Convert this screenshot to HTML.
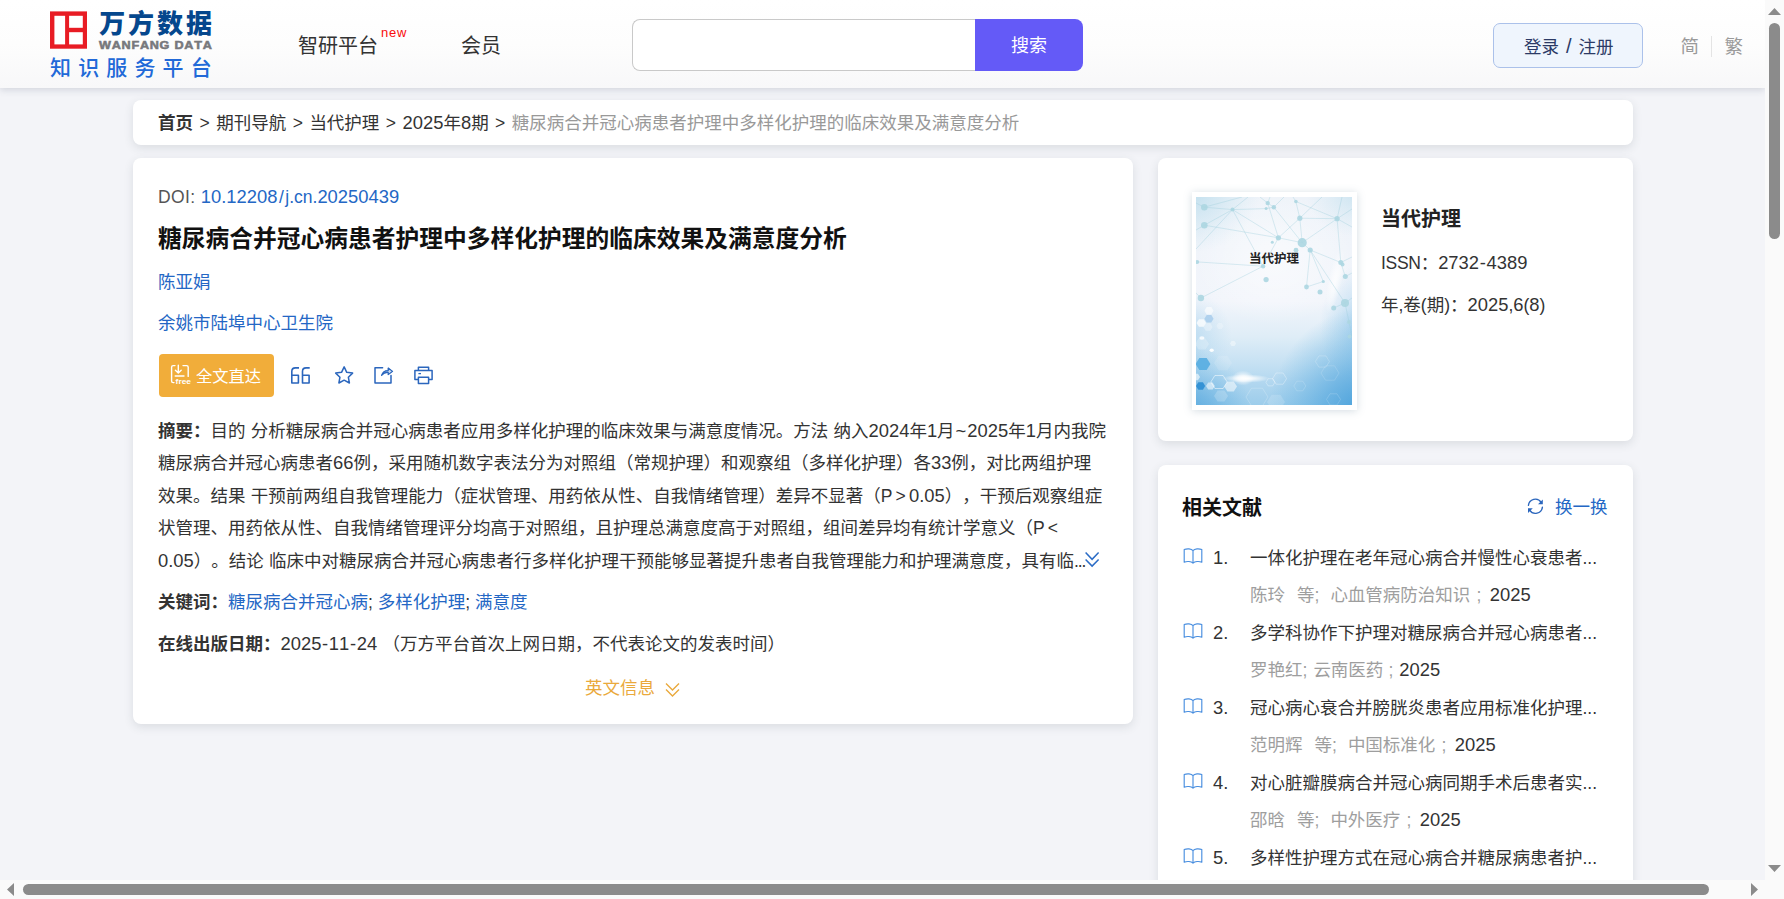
<!DOCTYPE html>
<html lang="zh-CN">
<head>
<meta charset="utf-8">
<title>糖尿病合并冠心病患者护理中多样化护理的临床效果及满意度分析</title>
<style>
*{box-sizing:border-box;margin:0;padding:0}
html,body{width:1784px;height:899px;overflow:hidden}
body{position:relative;background:#f3f4f8;color:#333;font-family:"Liberation Sans","Noto Sans CJK SC",sans-serif;font-size:17.5px;line-height:1;text-spacing-trim:space-all;font-kerning:none}
.abs{position:absolute;white-space:nowrap}
a{color:inherit;text-decoration:none}
/* header */
#hd{position:absolute;left:0;top:0;width:1765px;height:88px;background:linear-gradient(180deg,#ffffff 0%,#fdfdfd 50%,#f8f8f9 100%);box-shadow:0 2px 7px rgba(60,70,100,.18)}
.t{position:absolute;white-space:nowrap;line-height:1;transform:translateY(-44.5%)}
.n{font-size:105%;line-height:0}
.card{position:absolute;background:#fff;border-radius:8px;box-shadow:0 3px 10px rgba(50,62,70,.125)}
.blue{color:#2467c5}
.gray{color:#9e9e9e}
.b{font-weight:bold}
.sp{display:inline-block}
.sep{display:inline-block;width:23.2px;text-align:center}
.fw{display:inline-block;width:16.5px;text-align:center}
.dk{color:#333}
.dots{letter-spacing:-1.05px}
.hy{margin:0 .7px}
#ab1,#ab2,#ab3,#ab4,#ab5,#dt{word-spacing:.4px}
</style>
</head>
<body>
<!-- HEADER -->
<div id="hd">
  <svg class="abs" style="left:50px;top:11px" width="38" height="38" viewBox="0 0 38 38"><rect x="0" y=".4" width="37" height="37.3" fill="#e81c24"/><rect x="4.4" y="4.8" width="10.7" height="28.6" fill="#fff"/><rect x="19.1" y="4.8" width="13.7" height="12" fill="#fff"/><rect x="19.1" y="21.2" width="13.7" height="12.2" fill="#fff"/></svg>
  <div class="t" id="lg1" style="left:99.2px;top:21px;font-family:'Noto Sans CJK SC',sans-serif;font-weight:900;font-size:26px;color:#05478d;letter-spacing:2.9px">万方数据</div>
  <div class="t" id="lg2" style="left:99.3px;top:44.8px;font-weight:bold;font-size:10px;color:#77787c;letter-spacing:.6px;-webkit-text-stroke:.5px #77787c;transform-origin:0 50%;transform:translateY(-44.5%) scaleX(1.262)">WANFANG DATA</div>
  <div class="t" id="lg3" style="left:50px;top:66.3px;font-size:21px;font-weight:500;color:#2169d8;letter-spacing:7.15px">知识服务平台</div>

  <div class="t" style="left:298px;top:45px;font-size:20px;color:#333">智研平台</div>
  <div class="t" style="left:381px;top:31.5px;font-size:13px;color:#fa0c0c;letter-spacing:.75px">new</div>
  <div class="t" style="left:461px;top:45px;font-size:20px;color:#333">会员</div>

  <div class="abs" style="left:632px;top:19px;width:346px;height:52px;border:1px solid #c9c9c9;border-right:none;border-radius:8px 0 0 8px;background:#fff"></div>
  <div class="abs" style="left:975px;top:19px;width:108px;height:52px;border-radius:0 8px 8px 0;background:#645af7"></div>
  <div class="t" style="left:1011px;top:45px;font-size:18px;color:#fff">搜索</div>

  <div class="abs" style="left:1493px;top:23px;width:150px;height:45px;border:1px solid #abc1ea;border-radius:7px;background:#eff5fd"></div>
  <div class="t" style="left:1524px;top:46.8px;font-size:17.5px;color:#2c3a66">登录 <span style="margin:0 2.1px;font-size:20px;line-height:0">/</span> 注册</div>
  <div class="t" style="left:1680.5px;top:45.5px;font-size:18.5px;color:#9a9a9a">简</div>
  <div class="abs" style="left:1711px;top:36px;width:1px;height:21px;background:#e4e4e4"></div>
  <div class="t" style="left:1724.5px;top:45.5px;font-size:18.5px;color:#9a9a9a">繁</div>
</div>

<!-- BREADCRUMB -->
<div class="card" style="left:133px;top:100px;width:1500px;height:45px"></div>
<div class="t" id="bc" style="left:158px;top:122.5px;font-size:17.5px;color:#333"><span class="b">首页</span><span class="sep">&gt;</span>期刊导航<span class="sep">&gt;</span>当代护理<span class="sep">&gt;</span><span class="n">2025</span>年<span class="n">8</span>期<span class="sep">&gt;</span><span style="color:#999">糖尿病合并冠心病患者护理中多样化护理的临床效果及满意度分析</span></div>

<!-- MAIN CARD -->
<div class="card" style="left:133px;top:157.5px;width:1000px;height:566.5px"></div>
<div class="t" id="doi" style="left:158px;top:197px;color:#555"><span style="letter-spacing:.4px">DOI: </span><span class="blue"><span class="n">10.12208</span><span style="margin:0 1.5px">/</span>j.cn.<span class="n">20250439</span></span></div>
<div class="t b" id="ttl" style="left:158px;top:238px;font-size:23.75px;color:#111">糖尿病合并冠心病患者护理中多样化护理的临床效果及满意度分析</div>
<div class="t blue" id="au" style="left:158px;top:282px">陈亚娟</div>
<div class="t blue" id="af" style="left:158px;top:322.5px">余姚市陆埠中心卫生院</div>

<div class="abs" style="left:159px;top:354px;width:115px;height:43px;border-radius:4px;background:#f1ad3a"></div>
<div class="t" style="left:196px;top:374.6px;font-size:16.25px;color:#fff">全文直达</div>


<!-- button icon -->
<svg class="abs" style="left:169px;top:363px" width="24" height="24" viewBox="0 0 24 24" fill="none" stroke="#fff" stroke-width="1.4" stroke-linecap="round" stroke-linejoin="round"><path d="M6 2.6H4.2Q2.6 2.6 2.6 4.2V18Q2.6 19.6 4.2 19.6H5"/><path d="M14 2.6H17.6Q19.2 2.6 19.2 4.2V13.4"/><path d="M9.3 2.2V9.6M6.4 7.2L9.3 10L12.2 7.2"/><path d="M6.2 13H15"/><text x="6.6" y="21" font-family="Liberation Sans, sans-serif" font-size="7.6" font-weight="bold" fill="#fff" stroke="none" textLength="15.4" lengthAdjust="spacingAndGlyphs">free</text></svg>
<!-- quote 66 -->
<svg class="abs" style="left:289px;top:365px" width="22" height="20" viewBox="0 0 22 20" fill="none" stroke="#2b66bd" stroke-width="1.6" stroke-linejoin="round"><path d="M10 2.9H6.4Q2.8 2.9 2.8 6.5V18H9.4V10.2H2.8"/><path d="M20.7 2.9H17.1Q13.5 2.9 13.5 6.5V18H20.1V10.2H13.5"/></svg>
<!-- star -->
<svg class="abs" style="left:334px;top:365px" width="21" height="20" viewBox="0 0 21 20" fill="none" stroke="#2b66bd" stroke-width="1.5" stroke-linejoin="round"><path d="M10.15 1.9L12.75 7.3L18.6 8.1L14.35 12.2L15.4 18L10.15 15.2L4.9 18L5.95 12.2L1.7 8.1L7.55 7.3Z"/></svg>
<!-- share -->
<svg class="abs" style="left:373px;top:365px" width="22" height="20" viewBox="0 0 22 20" fill="none" stroke="#2b66bd" stroke-width="1.5" stroke-linejoin="round" stroke-linecap="round"><path d="M9.6 2.8H2V18H18V10.4"/><path d="M8.6 10.4C9.6 7 12 5.6 15.2 5.6V3L19.6 6.4L15.2 9.6V7.4C12.4 7.2 10.2 8.2 8.6 10.4Z" fill="#2b66bd" stroke-width=".6" fill-opacity=".25"/><path d="M8.6 10.4C9.6 7 12 5.6 15.2 5.6V3L19.6 6.4L15.2 9.6V7.4C12.4 7.2 10.2 8.2 8.6 10.4Z" stroke-width="1.1"/></svg>
<!-- print -->
<svg class="abs" style="left:413px;top:365px" width="21" height="20" viewBox="0 0 21 20" fill="none" stroke="#2b66bd" stroke-width="1.5" stroke-linejoin="round"><path d="M5.4 5.4V2.2H15.6V5.4"/><path d="M5.4 14.6H1.9V5.4H19.1V14.6H15.6"/><rect x="5.4" y="12.2" width="10.2" height="6.4"/><path d="M5.4 8.6H8" stroke-width="1.3"/></svg>
<!-- abstract chevron -->
<svg class="abs" style="left:1084px;top:551px" width="17" height="17" viewBox="0 0 17 17" fill="none" stroke="#2b6cc6" stroke-width="1.5"><path d="M1.6 1.6L8.1 8.3L14.6 1.6M1.6 8.4L8.1 15.1L14.6 8.4"/></svg>
<!-- english info chevron -->
<svg class="abs" style="left:664px;top:680.6px" width="17" height="17" viewBox="0 0 17 17" fill="none" stroke="#eaa93c" stroke-width="1.4"><path d="M2 2.6L8.5 9L15 2.6M2 8.6L8.5 15L15 8.6"/></svg>
<!-- abstract -->
<div class="t" id="ab1" style="left:158px;top:430.5px"><span class="b">摘要：</span>目的 分析糖尿病合并冠心病患者应用多样化护理的临床效果与满意度情况。方法 纳入<span class="n">2024</span>年<span class="n">1</span>月<span class="n" style="margin:0 1px">~</span><span class="n">2025</span>年<span class="n">1</span>月内我院</div>
<div class="t" id="ab2" style="left:158px;top:463px">糖尿病合并冠心病患者<span class="n">66</span>例，采用随机数字表法分为对照组（常规护理）和观察组（多样化护理）各<span class="n">33</span>例，对比两组护理</div>
<div class="t" id="ab3" style="left:158px;top:495.5px">效果。结果 干预前两组自我管理能力（症状管理、用药依从性、自我情绪管理）差异不显著（P<span class="fw">&gt;</span><span class="n">0.05</span>），干预后观察组症</div>
<div class="t" id="ab4" style="left:158px;top:528px">状管理、用药依从性、自我情绪管理评分均高于对照组，且护理总满意度高于对照组，组间差异均有统计学意义（P<span class="fw">&lt;</span></div>
<div class="t" id="ab5" style="left:158px;top:560.5px"><span class="n">0.05</span>）。结论 临床中对糖尿病合并冠心病患者行多样化护理干预能够显著提升患者自我管理能力和护理满意度，具有临<span class="dots">...</span></div>

<div class="t" id="kw" style="left:158px;top:601.5px"><span class="b">关键词：</span><span class="blue">糖尿病合并冠心病</span>; <span class="blue">多样化护理</span>; <span class="blue">满意度</span></div>
<div class="t" id="dt" style="left:158px;top:643.5px"><span class="b">在线出版日期：</span><span class="n">2025<span class="hy">-</span>11<span class="hy">-</span>24</span> （万方平台首次上网日期，不代表论文的发表时间）</div>
<div class="t" id="en" style="left:585px;top:687.6px;color:#eaa93c">英文信息</div>

<!-- RIGHT CARD 1 -->
<div class="card" style="left:1158px;top:157.5px;width:475px;height:283px"></div>
<div class="abs" style="left:1191.5px;top:192px;width:165.5px;height:218px;background:#fff;box-shadow:0 1px 8px rgba(100,130,150,.28)"></div>

<svg class="abs" style="left:1196px;top:197px" width="156" height="208" viewBox="0 0 156 208">
<defs>
<linearGradient id="cg" x1="0" y1="0" x2="0" y2="1"><stop offset="0" stop-color="#eef3f9"/><stop offset=".5" stop-color="#f2f5fb"/><stop offset=".67" stop-color="#dfedf7"/><stop offset=".8" stop-color="#c6e1f3"/><stop offset=".9" stop-color="#b0d6ef"/><stop offset="1" stop-color="#9dcdeb"/></linearGradient>
<radialGradient id="r1"><stop offset="0" stop-color="#3a98d7" stop-opacity=".95"/><stop offset=".45" stop-color="#4aa2dc" stop-opacity=".6"/><stop offset="1" stop-color="#5aaee0" stop-opacity="0"/></radialGradient>
<radialGradient id="r2"><stop offset="0" stop-color="#b9dcec" stop-opacity=".9"/><stop offset="1" stop-color="#c8e3f0" stop-opacity="0"/></radialGradient>
<radialGradient id="r3"><stop offset="0" stop-color="#86c2e9" stop-opacity=".8"/><stop offset="1" stop-color="#9ccdec" stop-opacity="0"/></radialGradient>
<radialGradient id="gl"><stop offset="0" stop-color="#fff" stop-opacity="1"/><stop offset=".4" stop-color="#fff" stop-opacity=".7"/><stop offset="1" stop-color="#fff" stop-opacity="0"/></radialGradient>
<clipPath id="cc"><rect width="156" height="208"/></clipPath>
</defs>
<g clip-path="url(#cc)">
<rect width="156" height="208" fill="url(#cg)"/>
<ellipse cx="-6" cy="-6" rx="70" ry="62" fill="url(#r2)"/>
<ellipse cx="162" cy="-4" rx="52" ry="44" fill="url(#r2)" opacity=".75"/>
<ellipse cx="-12" cy="138" rx="48" ry="46" fill="url(#r3)" opacity=".6"/>
<ellipse cx="170" cy="128" rx="46" ry="62" fill="url(#r3)" opacity=".85"/>
<ellipse cx="172" cy="222" rx="100" ry="112" fill="url(#r1)"/>
<ellipse cx="-14" cy="226" rx="72" ry="80" fill="url(#r1)" opacity=".85"/>
<ellipse cx="78" cy="62" rx="80" ry="66" fill="url(#gl)" opacity=".55"/><ellipse cx="139" cy="84" rx="7" ry="34" fill="url(#gl)" opacity=".75" transform="rotate(12 139 84)"/>
<path d="M8.3 10.2L36.5 12.6M8.3 28.2L36.5 12.6M8.3 28.2L82.4 40.8M36.5 12.6L82.4 40.8M36.5 12.6L70.1 11.6M36.5 12.6L67.1 69.2M1.2 64.9L67.1 69.2M67.1 69.2L4.9 101M71.7 6.1L82.4 40.8M77.8 10.2L106.2 45.7M99.9 4.5L103.8 21.2M103.8 21.2L141.1 21.7M103.8 21.2L82.4 40.8M103.8 21.2L106.2 45.7M99.9 4.5L141.1 21.7M82.4 40.8L106.2 45.7M106.2 45.7L114.2 53M106.2 45.7L141.1 21.7M114.2 53L144.8 65.5M114.2 53L110.5 90M114.2 53L127.3 84.5M110.5 90L127.3 84.5M141.1 21.7L144.8 65.5M82.4 40.8L67.1 69.2M114.2 53L149 106M144.8 65.5L149.3 79.6M149 106L153 125M137.7 111L149 106M70.1 11.6L77.8 10.2M71.7 6.1L77.8 10.2M8.3 10.2L46 0M8.3 10.2L0 6M8.3 28.2L0 33M0 52L36.5 12.6M36.5 12.6L52 0M71.7 6.1L64 0M71.7 6.1L74 0M77.8 10.2L88 0M99.9 4.5L97 0M103.8 21.2L126 0M141.1 21.7L146 0M141.1 21.7L156 12M141.1 21.7L156 30M144.8 65.5L156 60M149.3 79.6L156 76M4.9 101L0 96M153 125L156 140M149 106L156 101" stroke="#9ccddb" stroke-width="1" stroke-opacity=".36" fill="none"/>
<g fill="#acd6e1" fill-opacity=".9"><circle cx="8.3" cy="10.2" r="3.3"/><circle cx="8.3" cy="28.2" r="3.3"/><circle cx="36.5" cy="12.6" r="2"/><circle cx="71.7" cy="6.1" r="2.2"/><circle cx="77.8" cy="10.2" r="2.2"/><circle cx="70.1" cy="11.6" r="1.5"/><circle cx="99.9" cy="4.5" r="1.8"/><circle cx="103.8" cy="21.2" r="2.6"/><circle cx="141.1" cy="21.7" r="2.6"/><circle cx="82.4" cy="40.8" r="2.6"/><circle cx="76.3" cy="45.3" r="1.5"/><circle cx="106.2" cy="45.7" r="4.6"/><circle cx="114.2" cy="53" r="2.6"/><circle cx="100" cy="53.2" r="2.4"/><circle cx="67.1" cy="69.2" r="2.2"/><circle cx="70.1" cy="82.6" r="2.6"/><circle cx="110.5" cy="90" r="2.4"/><circle cx="127.3" cy="84.5" r="1.6"/><circle cx="124" cy="95.1" r="2.5"/><circle cx="144.8" cy="65.5" r="2.5"/><circle cx="146.5" cy="67.5" r="2"/><circle cx="149.3" cy="79.6" r="2.5"/><circle cx="1.2" cy="64.9" r="2"/><circle cx="4.9" cy="101" r="3.2"/><circle cx="149" cy="106" r="4"/><circle cx="137.7" cy="111" r="2.5"/><circle cx="153" cy="125" r="2"/><circle cx="153.5" cy="139.5" r="2"/></g>
<g fill="#fff">
<path d="M17.6 113.7L15.3 117.4L10.7 117.4L8.4 113.7L10.7 110.0L15.3 110.0Z" fill-opacity=".6"/><path d="M10.1 126.0L7.7 129.8L2.9 129.8L0.5 126.0L2.9 122.2L7.7 122.2Z" fill-opacity=".75"/><path d="M17.6 121.7L15.3 125.4L10.7 125.4L8.4 121.7L10.7 118.0L15.3 118.0Z" fill="#9cc6ea" fill-opacity=".7"/><path d="M16.6 130.0L14.3 133.7L9.7 133.7L7.4 130.0L9.7 126.3L14.3 126.3Z" fill-opacity=".3"/><path d="M27.6 129.0L25.8 131.9L22.2 131.9L20.4 129.0L22.2 126.1L25.8 126.1Z" fill-opacity=".25"/>
<path d="M13.0 147.0L9.5 152.6L2.5 152.6L-1.0 147.0L2.5 141.4L9.5 141.4Z" fill-opacity=".22"/><path d="M40.0 146.5L38.5 148.9L35.5 148.9L34.0 146.5L35.5 144.1L38.5 144.1Z" fill-opacity=".4"/><path d="M36.0 166.0L31.5 173.2L22.5 173.2L18.0 166.0L22.5 158.8L31.5 158.8Z" fill-opacity=".12"/>
<ellipse cx="5.9" cy="141" rx="2.6" ry="1.8" fill-opacity=".8"/><ellipse cx="15.7" cy="153.2" rx="2.1" ry="1.8" fill-opacity=".95"/>
<path d="M18.8 189.0L16.6 192.5L12.2 192.5L10.0 189.0L12.2 185.5L16.6 185.5Z" fill-opacity=".55"/><path d="M41.0 189.5L37.8 194.6L31.4 194.6L28.2 189.5L31.4 184.4L37.8 184.4Z" fill-opacity=".55"/><path d="M4.0 180.0L2.0 183.2L-2.0 183.2L-4.0 180.0L-2.0 176.8L2.0 176.8Z" fill-opacity=".6"/>
<path d="M32.0 199.0L28.5 204.6L21.5 204.6L18.0 199.0L21.5 193.4L28.5 193.4Z" fill-opacity=".2"/><path d="M89.0 205.0L84.5 212.2L75.5 212.2L71.0 205.0L75.5 197.8L84.5 197.8Z" fill-opacity=".16"/>
</g>
<path d="M14.4 167.0L10.7 172.9L3.3 172.9L-0.4 167.0L3.3 161.1L10.7 161.1Z" fill="#56ade1" fill-opacity=".9"/>
<path d="M9.2 189.0L6.9 192.7L2.3 192.7L0.0 189.0L2.3 185.3L6.9 185.3Z" fill="#2f8fd4" fill-opacity=".95"/>
<g fill="none" stroke="#fff" stroke-opacity=".4" stroke-width=".8">
<path d="M31.2 185.0L27.1 191.5L18.9 191.5L14.8 185.0L18.9 178.5L27.1 178.5Z" stroke-opacity=".65"/><path d="M90.6 181.6L87.1 187.2L80.1 187.2L76.6 181.6L80.1 176.0L87.1 176.0Z"/><path d="M78.9 185.3L76.7 188.9L72.2 188.9L69.9 185.3L72.2 181.7L76.7 181.7Z"/><path d="M133.4 164.5L129.9 170.1L122.9 170.1L119.4 164.5L122.9 158.9L129.9 158.9Z" stroke-opacity=".25"/><path d="M109.8 189.0L106.8 193.8L100.8 193.8L97.8 189.0L100.8 184.2L106.8 184.2Z" stroke-opacity=".2"/><path d="M72.0 200.0L66.5 208.8L55.5 208.8L50.0 200.0L55.5 191.2L66.5 191.2Z" stroke-opacity=".25"/><path d="M144.5 202.4L141.0 208.0L134.0 208.0L130.5 202.4L134.0 196.8L141.0 196.8Z" stroke-opacity=".2"/><path d="M143.0 176.0L138.5 183.2L129.5 183.2L125.0 176.0L129.5 168.8L138.5 168.8Z" stroke-opacity=".18"/>
</g>
<ellipse cx="50" cy="181.5" rx="24" ry="4.2" fill="url(#gl)"/>
<ellipse cx="47" cy="181" rx="11" ry="7.5" fill="url(#gl)" opacity=".9"/>
</g>
</svg>
<div class="t b" id="cvt" style="left:1249px;top:258px;font-size:12.5px;color:#222;font-family:'Noto Sans CJK SC',sans-serif">当代护理</div>
<div class="t b" style="left:1381px;top:218.3px;font-size:20px;color:#222">当代护理</div>
<div class="t" id="issn" style="left:1381px;top:262.6px"><span style="letter-spacing:-.3px">ISSN</span>：<span class="n">2732<span class="hy">-</span>4389</span></div>
<div class="t" id="yr" style="left:1381px;top:304.6px">年,卷(期)：<span class="n">2025</span>,<span class="n">6</span>(<span class="n">8</span>)</div>

<!-- RIGHT CARD 2 -->
<div class="card" style="left:1158px;top:464.5px;width:475px;height:460px"></div>
<div class="t b" style="left:1182px;top:506.8px;font-size:20px;color:#111">相关文献</div>
<div class="t blue" style="left:1555px;top:507px">换一换</div>

<svg class="abs" style="left:1525px;top:496px" width="21" height="21" viewBox="0 0 21 21" fill="none" stroke="#2b66bd" stroke-width="1.35" stroke-linecap="round"><path d="M3.4 9.4A7.000 7.000 0 0 1 16.200 6.300"/><path d="M17.400 11.200A7.000 7.000 0 0 1 4.600 14.200"/><path d="M17.8 3.400V8.200H13z" fill="#2b66bd" stroke="none"/><path d="M3 17V12.200H7.800z" fill="#2b66bd" stroke="none"/></svg>
<svg class="abs" style="left:1182px;top:547.3px" width="22" height="18" viewBox="0 0 22 18" fill="none" stroke="#4a8fe0" stroke-width="1.15" stroke-linejoin="round"><path d="M11 3.6C9.4 1.6 5 1.3 2.2 2.6V15.2C5 14 9.2 14.3 11 16.2C12.800 14.300 17 14 19.8 15.2V2.6C17 1.3 12.600 1.600 11 3.600V16"/></svg>
<div class="t" style="left:1213px;top:557.7px"><span class="n">1.</span></div>
<div class="t" id="rt1" style="left:1250px;top:557.7px">一体化护理在老年冠心病合并慢性心衰患者<span>...</span></div>
<div class="t gray" id="rs1" style="left:1250px;top:594.5px">陈玲<span class="sp" style="width:12px"></span>等;<span class="sp" style="width:11px"></span>心血管病防治知识<span class="sp" style="width:6px"></span>;<span class="sp" style="width:8.5px"></span><span class="n dk">2025</span></div>
<svg class="abs" style="left:1182px;top:622.3px" width="22" height="18" viewBox="0 0 22 18" fill="none" stroke="#4a8fe0" stroke-width="1.15" stroke-linejoin="round"><path d="M11 3.6C9.4 1.6 5 1.3 2.2 2.6V15.2C5 14 9.2 14.3 11 16.2C12.800 14.300 17 14 19.8 15.2V2.6C17 1.3 12.600 1.600 11 3.600V16"/></svg>
<div class="t" style="left:1213px;top:632.7px"><span class="n">2.</span></div>
<div class="t" id="rt2" style="left:1250px;top:632.7px">多学科协作下护理对糖尿病合并冠心病患者<span>...</span></div>
<div class="t gray" id="rs2" style="left:1250px;top:669.5px">罗艳红;<span class="sp" style="width:6px"></span>云南医药<span class="sp" style="width:5px"></span>;<span class="sp" style="width:6px"></span><span class="n dk">2025</span></div>
<svg class="abs" style="left:1182px;top:697.3px" width="22" height="18" viewBox="0 0 22 18" fill="none" stroke="#4a8fe0" stroke-width="1.15" stroke-linejoin="round"><path d="M11 3.6C9.4 1.6 5 1.3 2.2 2.6V15.2C5 14 9.2 14.3 11 16.2C12.800 14.300 17 14 19.8 15.2V2.6C17 1.3 12.600 1.600 11 3.600V16"/></svg>
<div class="t" style="left:1213px;top:707.7px"><span class="n">3.</span></div>
<div class="t" id="rt3" style="left:1250px;top:707.7px">冠心病心衰合并膀胱炎患者应用标准化护理<span>...</span></div>
<div class="t gray" id="rs3" style="left:1250px;top:744.5px">范明辉<span class="sp" style="width:12px"></span>等;<span class="sp" style="width:11px"></span>中国标准化<span class="sp" style="width:6px"></span>;<span class="sp" style="width:8.5px"></span><span class="n dk">2025</span></div>
<svg class="abs" style="left:1182px;top:772.3px" width="22" height="18" viewBox="0 0 22 18" fill="none" stroke="#4a8fe0" stroke-width="1.15" stroke-linejoin="round"><path d="M11 3.6C9.4 1.6 5 1.3 2.2 2.6V15.2C5 14 9.2 14.3 11 16.2C12.800 14.300 17 14 19.8 15.2V2.6C17 1.3 12.600 1.600 11 3.600V16"/></svg>
<div class="t" style="left:1213px;top:782.7px"><span class="n">4.</span></div>
<div class="t" id="rt4" style="left:1250px;top:782.7px">对心脏瓣膜病合并冠心病同期手术后患者实<span>...</span></div>
<div class="t gray" id="rs4" style="left:1250px;top:819.5px">邵晗<span class="sp" style="width:12px"></span>等;<span class="sp" style="width:11px"></span>中外医疗<span class="sp" style="width:6px"></span>;<span class="sp" style="width:8.5px"></span><span class="n dk">2025</span></div>
<svg class="abs" style="left:1182px;top:847.3px" width="22" height="18" viewBox="0 0 22 18" fill="none" stroke="#4a8fe0" stroke-width="1.15" stroke-linejoin="round"><path d="M11 3.6C9.4 1.6 5 1.3 2.2 2.6V15.2C5 14 9.2 14.3 11 16.2C12.800 14.300 17 14 19.8 15.2V2.6C17 1.3 12.600 1.600 11 3.600V16"/></svg>
<div class="t" style="left:1213px;top:857.7px"><span class="n">5.</span></div>
<div class="t" id="rt5" style="left:1250px;top:857.7px">多样性护理方式在冠心病合并糖尿病患者护<span>...</span></div>
<!-- SCROLLBARS -->
<div class="abs" style="left:1765px;top:0;width:19px;height:899px;background:#fafafa"></div>
<div class="abs" style="left:0;top:880px;width:1784px;height:19px;background:#fafafa"></div>
<div class="abs" style="left:1769px;top:23px;width:11px;height:216px;border-radius:5.5px;background:#8b8b8b"></div>
<div class="abs" style="left:23px;top:884px;width:1686px;height:11px;border-radius:5.5px;background:#8b8b8b"></div>
<svg class="abs" style="left:1765px;top:0" width="19" height="899"><path d="M3 15 L9.5 8 L16 15Z M3 865 L9.5 872 L16 865Z" fill="#8b8b8b"/></svg>
<svg class="abs" style="left:0;top:880px" width="1765" height="19"><path d="M14 3 L7 9.5 L14 16Z M1751 3 L1758 9.5 L1751 16Z" fill="#8b8b8b"/></svg>
</body>
</html>
